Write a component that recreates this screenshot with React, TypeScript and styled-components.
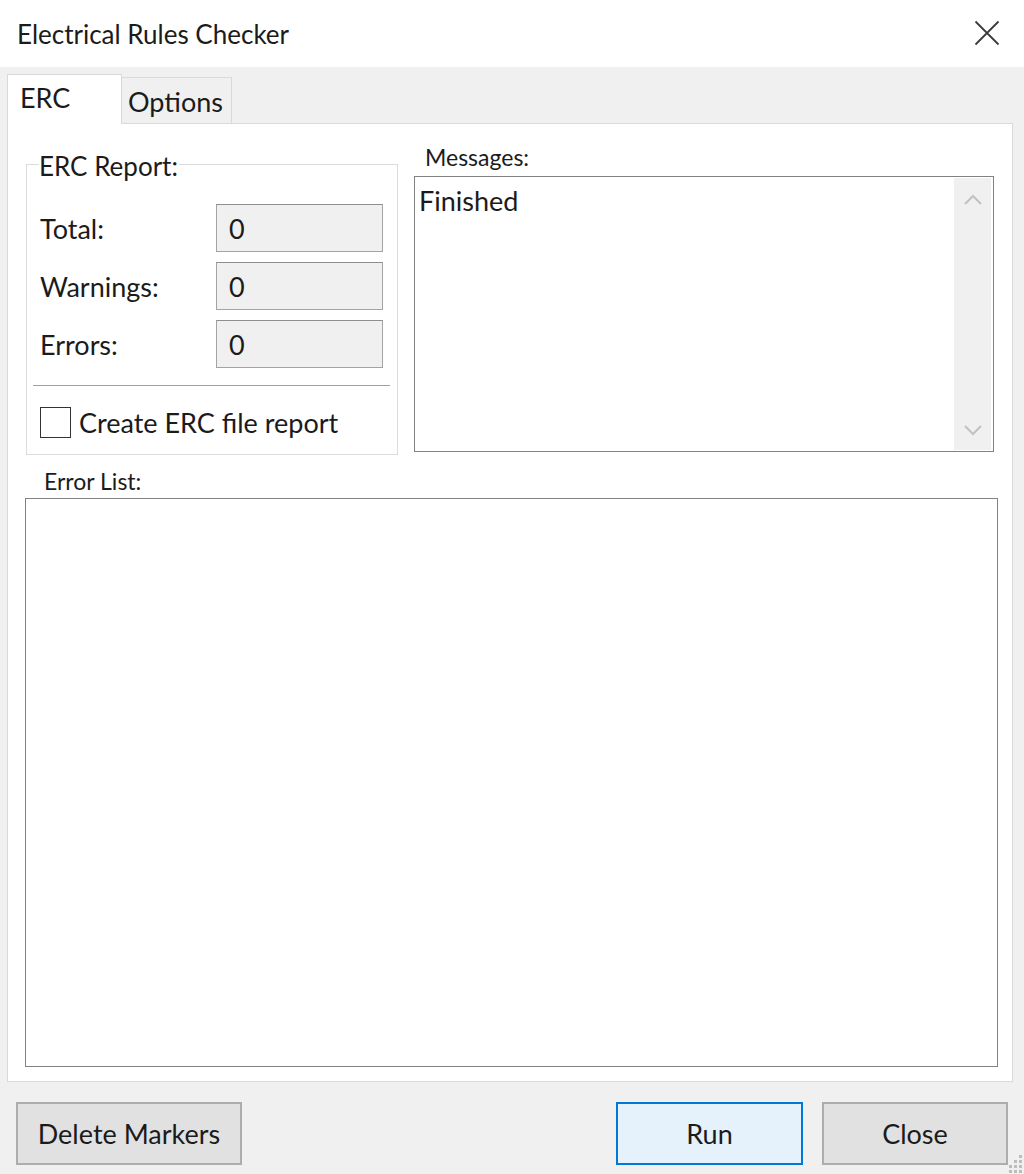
import React from "react";
import styled, { createGlobalStyle } from "styled-components";

const Global = createGlobalStyle`
  html, body { margin: 0; padding: 0; background: #f0f0f0; }
  * { box-sizing: border-box; }
  body { font-family: Lato, "Open Sans", sans-serif; color: #1a1a1a; }
`;

const Window = styled.div`
  position: relative;
  width: 1024px;
  height: 1174px;
  display: flex;
  flex-direction: column;
  background: #f0f0f0;
  overflow: hidden;
`;

const TitleBar = styled.div`
  height: 67px;
  flex: none;
  background: #ffffff;
  display: flex;
  align-items: center;
  justify-content: space-between;
  padding: 0 24px 0 17px;
`;

const Title = styled.div`
  font-size: 26px;
  color: #1b1b1b;
`;

const CloseX = styled.div`
  width: 26px;
  height: 26px;
  display: flex;
  align-items: center;
  justify-content: center;
  margin-top: -2px;
`;

const Body = styled.div`
  flex: 1;
  display: flex;
  flex-direction: column;
  padding: 7px 11px 9px 7px;
`;

const TabRow = styled.div`
  display: flex;
  align-items: flex-end;
  height: 49px;
  flex: none;
  position: relative;
  z-index: 1;
`;

const Tab = styled.div<{ $active?: boolean }>`
  font-size: 27px;
  line-height: 32px;
  display: flex;
  align-items: center;
  padding-left: ${(p) => (p.$active ? "12px" : "6px")};
  padding-top: ${(p) => (p.$active ? "0" : "3px")};
  width: ${(p) => (p.$active ? "115px" : "110px")};
  height: ${(p) => (p.$active ? "50px" : "46px")};
  margin-bottom: ${(p) => (p.$active ? "-1px" : "0")};
  background: ${(p) => (p.$active ? "#ffffff" : "#f0f0f0")};
  border: 1px solid #d9d9d9;
  border-bottom: none;
  border-left: ${(p) => (p.$active ? "1px solid #d9d9d9" : "none")};
  color: #1b1b1b;
  span { margin-top: ${(p) => (p.$active ? "-3px" : "0")}; }
`;

const Panel = styled.div`
  height: 959px;
  flex: none;
  background: #ffffff;
  border: 1px solid #d9d9d9;
  padding: 23px 14px 14px 18px;
  display: flex;
  flex-direction: column;
`;

const TopRow = styled.div`
  display: flex;
  gap: 16px;
  height: 315px;
  flex: none;
`;

const GroupBox = styled.fieldset`
  margin: 0;
  width: 372px;
  height: 308px;
  border: 1px solid #dcdcdc;
  padding: 0 7px 0 13px;
  display: flex;
  flex-direction: column;
`;

const Legend = styled.legend`
  font-size: 26px;
  padding: 4px 1px 0 0;
  margin-left: -1px;
  line-height: 30px;
  color: #1b1b1b;
`;

const Fields = styled.div`
  display: flex;
  flex-direction: column;
  gap: 10px;
  margin-top: 23px;
  padding-right: 7px;
`;

const FieldRow = styled.div`
  display: flex;
  align-items: center;
  justify-content: space-between;
  height: 48px;
`;

const FieldLabel = styled.div`
  font-size: 27px;
  color: #1b1b1b;
`;

const ValueBox = styled.div`
  width: 167px;
  height: 48px;
  background: #f0f0f0;
  border: 1px solid #a3a3a3;
  border-top-color: #8e8e8e;
  font-size: 27px;
  display: flex;
  align-items: center;
  padding-left: 12px;
  color: #1b1b1b;
`;

const Separator = styled.div`
  height: 1px;
  background: #a0a0a0;
  margin: 17px 0 0 -7px;
`;

const CheckRow = styled.label`
  display: flex;
  align-items: center;
  gap: 8px;
  height: 31px;
  margin-top: 21px;
  font-size: 27px;
  color: #1b1b1b;
`;

const CheckBox = styled.span`
  width: 31px;
  height: 31px;
  flex: none;
  border: 1px solid #333333;
  background: #ffffff;
  display: inline-block;
`;

const Column = styled.div`
  flex: 1;
  display: flex;
  flex-direction: column;
  padding-right: 4px;
`;

const SmallLabel = styled.div<{ $indent: number; $offset: number }>`
  font-size: 23px;
  color: #1b1b1b;
  height: 23px;
  line-height: 23px;
  padding-left: ${(p) => p.$indent}px;
  margin-top: ${(p) => p.$offset}px;
`;

const MessagesBox = styled.div`
  margin-top: 7px;
  height: 276px;
  border: 1px solid #828282;
  display: flex;
  padding: 1px 2px 1px 0;
`;

const MessagesText = styled.div`
  flex: 1;
  font-size: 27px;
  line-height: 32px;
  padding: 7px 0 0 4px;
  color: #1b1b1b;
`;

const ScrollBar = styled.div`
  width: 37px;
  background: #f0f0f0;
  display: flex;
  flex-direction: column;
  justify-content: space-between;
  align-items: center;
  padding: 16px 0 14px;
`;

const ErrorSection = styled.div`
  flex: 1;
  display: flex;
  flex-direction: column;
  margin-top: 19px;
`;

const ErrorBox = styled.div`
  flex: 1;
  margin-top: 5px;
  margin-left: -1px;
  border: 1px solid #828282;
  background: #ffffff;
`;

const Footer = styled.div`
  display: flex;
  align-items: center;
  margin-top: 20px;
  padding-left: 9px;
  padding-right: 5px;
  gap: 19px;
`;

const Button = styled.button<{ $primary?: boolean; $w: number }>`
  width: ${(p) => p.$w}px;
  height: 63px;
  font-family: inherit;
  font-size: 27px;
  color: #1b1b1b;
  background: ${(p) => (p.$primary ? "#e5f1fb" : "#e1e1e1")};
  border: ${(p) => (p.$primary ? "2px solid #0078d7" : "2px solid #adadad")};
  padding: 0;
  cursor: default;
`;

const Spacer = styled.div`
  flex: 1;
`;

const Grip = styled.svg`
  position: absolute;
  right: 1px;
  bottom: 1px;
`;

const Chevron = ({ up }: { up?: boolean }) => (
  <svg width="20" height="12" viewBox="0 0 20 12">
    <polyline
      points={up ? "2,10 10,2 18,10" : "2,2 10,10 18,2"}
      fill="none"
      stroke="#c2c2c2"
      strokeWidth="2"
    />
  </svg>
);

export default function App() {
  return (
    <>
      <Global />
      <Window>
        <TitleBar>
          <Title>Electrical Rules Checker</Title>
          <CloseX>
            <svg width="26" height="26" viewBox="0 0 26 26">
              <path d="M1.5 1.5 L24.5 24.5 M24.5 1.5 L1.5 24.5" stroke="#3b3b3b" strokeWidth="1.8" />
            </svg>
          </CloseX>
        </TitleBar>
        <Body>
          <TabRow>
            <Tab $active>
              <span>ERC</span>
            </Tab>
            <Tab>
              <span>Options</span>
            </Tab>
          </TabRow>
          <Panel>
            <TopRow>
              <GroupBox>
                <Legend>ERC Report:</Legend>
                <Fields>
                  <FieldRow>
                    <FieldLabel>Total:</FieldLabel>
                    <ValueBox>0</ValueBox>
                  </FieldRow>
                  <FieldRow>
                    <FieldLabel>Warnings:</FieldLabel>
                    <ValueBox>0</ValueBox>
                  </FieldRow>
                  <FieldRow>
                    <FieldLabel>Errors:</FieldLabel>
                    <ValueBox>0</ValueBox>
                  </FieldRow>
                </Fields>
                <Separator />
                <CheckRow>
                  <CheckBox />
                  Create ERC file report
                </CheckRow>
              </GroupBox>
              <Column>
                <SmallLabel $indent={11} $offset={-1}>Messages:</SmallLabel>
                <MessagesBox>
                  <MessagesText>Finished</MessagesText>
                  <ScrollBar>
                    <Chevron up />
                    <Chevron />
                  </ScrollBar>
                </MessagesBox>
              </Column>
            </TopRow>
            <ErrorSection>
              <SmallLabel $indent={18} $offset={-11}>Error List:</SmallLabel>
              <ErrorBox />
            </ErrorSection>
          </Panel>
          <Footer>
            <Button $w={226}>Delete Markers</Button>
            <Spacer />
            <Button $primary $w={187}>Run</Button>
            <Button $w={186}>Close</Button>
          </Footer>
        </Body>
        <Grip width="14" height="20" viewBox="0 0 14 20">
          {[
            [10, 2],
            [10, 7],
            [5, 7],
            [10, 12],
            [5, 12],
            [0, 12],
            [10, 17],
            [5, 17],
            [0, 17],
          ].map(([x, y], i) => (
            <rect key={i} x={x} y={y} width="3" height="3" fill="#bdbdbd" />
          ))}
        </Grip>
      </Window>
    </>
  );
}
